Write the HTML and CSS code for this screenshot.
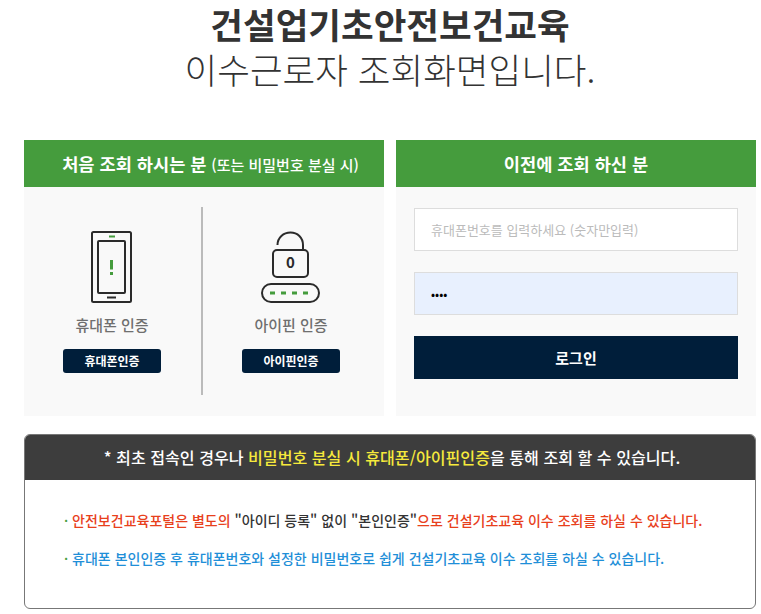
FILE: index.html
```html
<!DOCTYPE html>
<html lang="ko">
<head>
    <meta charset="UTF-8">
    <meta name="viewport" content="width=device-width, initial-scale=1.0">
    <title>이수근로자 조회</title>
    <link rel="stylesheet" href="styles.css">
</head>
<body>
    <div class="container">
        <div class="title">
            <h1>건설업기초안전보건교육</h1>
            <h2>이수근로자 조회화면입니다.</h2>
        </div>

        <div class="panels">
            <div class="panel">
                <div class="panel-head first">처음 조회 하시는 분 <small>(또는 비밀번호 분실 시)</small></div>
                <div class="panel-body auth">
                    <div class="auth-item">
                        <svg class="auth-icon" width="60" height="72" viewBox="0 0 60 72" fill="none">
                            <rect x="10" y="1" width="39" height="70" rx="1.5" stroke="#2b2b2b" stroke-width="2"/>
                            <rect x="16" y="10" width="27" height="52" rx="1" stroke="#2b2b2b" stroke-width="2"/>
                            <path d="M27 5.500h6" stroke="#459c3d" stroke-width="2"/>
                            <path d="M25 66.500h9" stroke="#2b2b2b" stroke-width="2"/>
                            <path d="M29.500 29v9.500" stroke="#459c3d" stroke-width="3"/>
                            <path d="M29.500 41v3" stroke="#459c3d" stroke-width="3"/>
                        </svg>
                        <p class="auth-name">휴대폰 인증</p>
                        <a class="auth-btn">휴대폰인증</a>
                    </div>
                    <div class="auth-item">
                        <svg class="auth-icon" width="60" height="72" viewBox="0 0 60 72" fill="none">
                            <path d="M16.500 14C16.500 6.500 22.500 1.500 29.500 1.500S42 6.500 42 14V19" stroke="#2b2b2b" stroke-width="2"/>
                            <rect x="12" y="19" width="35" height="27" rx="4" stroke="#2b2b2b" stroke-width="2"/>
                            <rect x="1" y="53" width="57" height="18" rx="9" stroke="#2b2b2b" stroke-width="2"/>
                            <text class="pin-digit" x="29.500" y="37">0</text>
                            <path d="M9 62h5M20 62h5M31 62h5M42 62h5" stroke="#459c3d" stroke-width="3"/>
                        </svg>
                        <p class="auth-name">아이핀 인증</p>
                        <a class="auth-btn">아이핀인증</a>
                    </div>
                </div>
            </div>

            <div class="panel">
                <div class="panel-head">이전에 조회 하신 분</div>
                <form class="panel-body login">
                    <input type="text" placeholder="휴대폰번호를 입력하세요 (숫자만입력)">
                    <input class="filled" type="password" value="1234">
                    <button type="button">로그인</button>
                </form>
            </div>
        </div>

        <div class="notice">
            <div class="notice-head">* 최초 접속인 경우나 <span class="yellow">비밀번호 분실 시 휴대폰/아이핀인증</span>을 통해 조회 할 수 있습니다.</div>
            <div class="notice-body">
                <p><i>·</i> <span class="red">안전보건교육포털은 별도의</span> "아이디 등록" 없이 "본인인증"<span class="red">으로 건설기초교육 이수 조회를 하실 수 있습니다.</span></p>
                <p class="blue"><i>·</i> 휴대폰 본인인증 후 휴대폰번호와 설정한 비밀번호로 쉽게 건설기초교육 이수 조회를 하실 수 있습니다.</p>
            </div>
        </div>
    </div>
</body>
</html>
```

FILE: styles.css
```css
html, body {
    height: 100%;
    overflow: hidden;
}

body {
    margin: 0;
    font-family: "Noto Sans CJK KR", "Noto Sans", sans-serif;
    background-color: #ffffff;
    color: #333333;
}

.container {
    width: 732px;
    margin-left: 24px;
}

.title {
    height: 140px;
    text-align: center;
    color: #333333;
}

.title h1 {
    margin: 0;
    font-size: 35.5px;
    line-height: 48px;
    font-weight: 700;
}

.title h2 {
    margin: 0;
    font-size: 35.5px;
    line-height: 42px;
    font-weight: 300;
}

.panels {
    display: flex;
    gap: 12px;
}

.panel {
    width: 360px;
    height: 276px;
    background-color: #f9f9f9;
}

.panel-head {
    height: 47px;
    line-height: 47px;
    text-align: center;
    background-color: #459c3d;
    color: #ffffff;
    font-size: 17.6px;
    font-weight: 700;
}

.panel-head.first {
    padding-left: 13px;
}

.panel-head small {
    font-size: 15px;
    font-weight: 500;
}

.panel-body {
    box-sizing: border-box;
    height: 229px;
}

.auth {
    display: flex;
    padding: 20px 0 21px;
}

.auth-item {
    flex: 1;
    display: flex;
    flex-direction: column;
    align-items: center;
    box-sizing: border-box;
    padding: 24px 5px 0 0;
}

.auth-item:first-child {
    flex: none;
    width: 179px;
    padding-right: 1px;
    border-right: 2px solid #bbbbbb;
}

.pin-digit {
    font-size: 15px;
    font-weight: 700;
    text-anchor: middle;
    fill: #2b2b2b;
}

.auth-name {
    margin: 11px 0 13px;
    font-size: 15px;
    line-height: 22px;
    font-weight: 500;
    color: #6f6f6f;
}

.auth-btn {
    display: block;
    width: 98px;
    height: 24px;
    line-height: 24px;
    text-align: center;
    border-radius: 3px;
    background-color: #001e3a;
    color: #ffffff;
    font-size: 12px;
    font-weight: 700;
}

.login {
    display: flex;
    flex-direction: column;
    padding: 21px 18px 0;
}

.login input {
    box-sizing: border-box;
    height: 43px;
    margin-bottom: 21px;
    padding: 0 16px;
    border: 1px solid #dddddd;
    background-color: #ffffff;
    font-family: inherit;
    font-size: 13px;
}

.login input::placeholder {
    color: #bbbbbb;
}

.login input.filled {
    background-color: #e8f0fe;
    color: #000000;
    font-size: 12px;
}

.login button {
    height: 43px;
    border: none;
    background-color: #001e3a;
    color: #ffffff;
    font-family: inherit;
    font-size: 15px;
    font-weight: 700;
}

.notice {
    box-sizing: border-box;
    height: 175px;
    margin-top: 18px;
    border: 1px solid #777777;
    border-radius: 6px;
    overflow: hidden;
}

.notice-head {
    height: 45px;
    line-height: 44px;
    padding-left: 4px;
    text-align: center;
    background-color: #3d3d3d;
    color: #ffffff;
    font-size: 16.1px;
    font-weight: 500;
}

.yellow {
    color: #f6e93c;
}

.notice-body {
    padding: 28px 39px 0;
    font-size: 14px;
    font-weight: 500;
    color: #333333;
}

.notice-body p {
    margin: 0 0 14px;
    line-height: 24px;
}

.notice-body i {
    font-style: normal;
    color: #459c3d;
}

.red {
    color: #e8401c;
}

.blue {
    color: #1f8fd8;
}
```
